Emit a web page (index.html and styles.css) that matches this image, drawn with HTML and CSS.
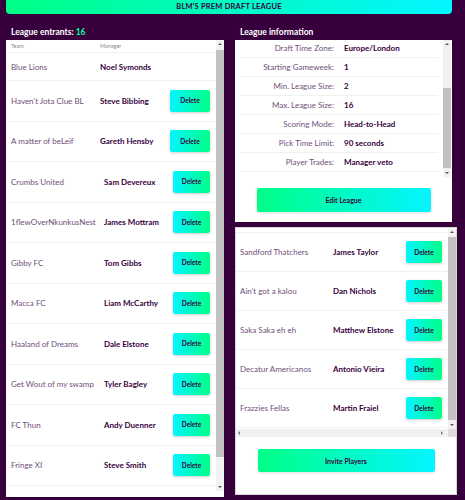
FILE: index.html
```html
<!DOCTYPE html>
<html lang="en">
<head>
  <meta charset="UTF-8">
  <title>BLM's Prem Draft League</title>
  <link rel="stylesheet" href="styles.css">
</head>
<body>

<div class="title-bar">BLM'S PREM DRAFT LEAGUE</div>

<div class="columns">
  <div class="column">
    <h3>League entrants: <span class="count">16</span></h3>
    <div class="panel entrants">
      <div class="scroll-row">
        <div class="scroll-content">
          <div class="row head"><span>Team</span><span>Manager</span></div>
          <div class="row short"><span class="team">Blue Lions</span><span class="manager">Noel Symonds</span></div>
          <div class="row"><span class="team">Haven't Jota Clue BL</span><span class="manager">Steve Bibbing</span><button class="delete">Delete</button></div>
          <div class="row"><span class="team">A matter of beLeif</span><span class="manager">Gareth Hensby</span><button class="delete">Delete</button></div>
          <div class="row alt"><span class="team">Crumbs United</span><span class="manager">Sam Devereux</span><button class="delete">Delete</button></div>
          <div class="row alt"><span class="team">1flewOverNkunkusNest</span><span class="manager">James Mottram</span><button class="delete">Delete</button></div>
          <div class="row alt"><span class="team">Gibby FC</span><span class="manager">Tom Gibbs</span><button class="delete">Delete</button></div>
          <div class="row alt"><span class="team">Macca FC</span><span class="manager">Liam McCarthy</span><button class="delete">Delete</button></div>
          <div class="row alt"><span class="team">Haaland of Dreams</span><span class="manager">Dale Elstone</span><button class="delete">Delete</button></div>
          <div class="row alt"><span class="team">Get Wout of my swamp</span><span class="manager">Tyler Bagley</span><button class="delete">Delete</button></div>
          <div class="row alt"><span class="team">FC Thun</span><span class="manager">Andy Duenner</span><button class="delete">Delete</button></div>
          <div class="row alt"><span class="team">Fringe XI</span><span class="manager">Steve Smith</span><button class="delete">Delete</button></div>
        </div>
        <div class="vbar entrants-bar">
          <span class="arrow up"></span>
          <div class="track"><div class="thumb"></div></div>
          <span class="arrow down"></span>
        </div>
      </div>
    </div>
  </div>

  <div class="column">
    <h3>League information</h3>
    <div class="panel info">
      <div class="scroll-row">
        <div class="scroll-content bottom">
          <div class="info-row"><span class="label">Draft Time Zone:</span><span class="value">Europe/London</span></div>
          <div class="info-row"><span class="label">Starting Gameweek:</span><span class="value">1</span></div>
          <div class="info-row"><span class="label">Min. League Size:</span><span class="value">2</span></div>
          <div class="info-row"><span class="label">Max. League Size:</span><span class="value">16</span></div>
          <div class="info-row"><span class="label">Scoring Mode:</span><span class="value">Head-to-Head</span></div>
          <div class="info-row"><span class="label">Pick Time Limit:</span><span class="value">90 seconds</span></div>
          <div class="info-row"><span class="label">Player Trades:</span><span class="value">Manager veto</span></div>
        </div>
        <div class="vbar info-bar">
          <span class="arrow up"></span>
          <div class="track"><div class="thumb"></div></div>
          <span class="arrow down"></span>
        </div>
      </div>
      <button class="wide-btn edit">Edit League</button>
    </div>

    <div class="panel invites">
      <div class="scroll-row">
        <div class="scroll-content">
          <div class="row clipped"></div>
          <div class="row"><span class="team">Sandford Thatchers</span><span class="manager">James Taylor</span><button class="delete">Delete</button></div>
          <div class="row"><span class="team">Ain't got a kalou</span><span class="manager">Dan Nichols</span><button class="delete">Delete</button></div>
          <div class="row"><span class="team">Saka Saka eh eh</span><span class="manager">Matthew Elstone</span><button class="delete">Delete</button></div>
          <div class="row"><span class="team">Decatur Americanos</span><span class="manager">Antonio Vieira</span><button class="delete">Delete</button></div>
          <div class="row"><span class="team">Frazzies Fellas</span><span class="manager">Martin Fraiel</span><button class="delete">Delete</button></div>
        </div>
        <div class="vbar invites-bar">
          <span class="arrow up"></span>
          <div class="track"><div class="thumb"></div></div>
          <span class="arrow down"></span>
        </div>
      </div>
      <div class="hbar">
        <span class="arrow left"></span>
        <div class="htrack"></div>
        <span class="arrow right"></span>
        <span class="corner"></span>
      </div>
      <button class="wide-btn invite">Invite Players</button>
    </div>
  </div>
</div>

</body>
</html>
```

FILE: styles.css
```css
body {
  margin: 0;
  background-color: #37003c;
  font-family: 'Lato', 'Open Sans', sans-serif;
  color: #37003c;
  font-size: 8px;
}
.title-bar {
  margin-left: 6px;
  width: 446px;
  height: 14px;
  line-height: 14px;
  background: linear-gradient(to right, #00ff87, #04f5ff);
  border-radius: 0 0 4px 4px;
  text-align: center;
  font-weight: 700;
  font-size: 7.5px;
  letter-spacing: 0.2px;
}
.columns {
  display: grid;
  grid-template-columns: 218px 222px;
  column-gap: 11px;
  padding-left: 6px;
}
h3 {
  margin: 0;
  height: 26px;
  box-sizing: border-box;
  padding: 12px 5px 0;
  line-height: 12px;
  font-size: 8.5px;
  font-weight: 700;
  color: #fff;
}
.count {
  color: #00ff87;
}
.panel {
  background: #fff;
}
.scroll-row {
  display: flex;
}
.scroll-content {
  flex: 1;
  overflow: hidden;
  display: flex;
  flex-direction: column;
}
.scroll-content.bottom {
  justify-content: flex-end;
  padding-bottom: 5px;
}

/* entrants list */
.entrants {
  height: 457px;
  box-sizing: border-box;
  padding-bottom: 6px;
}
.entrants .scroll-row {
  height: 451px;
}
.row {
  display: grid;
  grid-template-columns: 89px 1fr 40px;
  align-items: center;
  height: 40.5px;
  flex-shrink: 0;
  padding: 0 6px 0 5px;
  border-bottom: 1px solid #f2f2f2;
  box-sizing: border-box;
}
.row.alt {
  grid-template-columns: 93px 1fr 37px;
}
.row.head {
  height: 13px;
  font-size: 5.5px;
  color: #8a8a8a;
}
.row.short {
  height: 28px;
}
.team {
  color: #6f4f77;
  white-space: nowrap;
}
.manager {
  font-weight: 700;
  white-space: nowrap;
}
.delete {
  height: 22px;
  width: 100%;
  padding: 0;
  border: none;
  border-radius: 2px;
  background: linear-gradient(to right, #04f5ff, #00ff87);
  box-shadow: 0 1px 3px rgba(0,0,0,0.2);
  font-family: inherit;
  font-size: 6.5px;
  font-weight: 700;
  color: #37003c;
}

/* fake scrollbars */
.vbar {
  width: 8px;
  background: #f1f1f1;
  display: flex;
  flex-direction: column;
}
.track {
  flex: 1;
}
.thumb {
  background: #c1c1c1;
}
.arrow {
  display: block;
  width: 8px;
  height: 8px;
  flex-shrink: 0;
  position: relative;
}
.arrow::after {
  content: "";
  position: absolute;
  left: 2px;
  top: 3px;
  border: 2px solid transparent;
}
.arrow.up::after {
  top: 1px;
  border-bottom-color: #555;
}
.arrow.down::after {
  top: 3px;
  border-top-color: #555;
}
.arrow.left::after {
  left: 0;
  top: 2px;
  border-right-color: #777;
}
.arrow.right::after {
  left: 3px;
  top: 2px;
  border-left-color: #777;
}
.entrants-bar .thumb {
  margin-top: 2px;
  height: 407px;
}

/* league info */
.info {
  width: 217px;
  height: 182px;
  box-sizing: border-box;
  padding-bottom: 10px;
}
.info .scroll-row {
  height: 137px;
  padding-right: 1px;
}
.info-row {
  display: grid;
  grid-template-columns: 94px 1fr;
  column-gap: 10px;
  align-items: center;
  height: 19px;
  flex-shrink: 0;
  margin: 0 5px;
  border-bottom: 1px solid #f0f0f0;
  box-sizing: border-box;
}
.label {
  text-align: right;
  color: #6f4f77;
  white-space: nowrap;
}
.value {
  font-weight: 700;
  white-space: nowrap;
}
.info-bar .thumb {
  margin-top: 40px;
  height: 80px;
}
.wide-btn {
  display: block;
  margin: 11px auto 0;
  height: 24px;
  border: none;
  border-radius: 2px;
  background: linear-gradient(to right, #00ff87, #04f5ff);
  box-shadow: 0 1px 3px rgba(0,0,0,0.15);
  font-family: inherit;
  font-size: 7px;
  font-weight: 700;
  color: #37003c;
}
.edit {
  width: 174px;
}

/* invites */
.invites {
  margin-top: 5px;
  height: 268px;
  box-sizing: border-box;
  border: 1px solid #d8d8d8;
}
.invites .scroll-row {
  height: 201px;
}
.invites .row {
  height: 39px;
  grid-template-columns: 93px 1fr 36px;
  padding-left: 4px;
}
.invites .row.clipped {
  height: 5px;
}
.invites-bar .thumb {
  margin-top: 1px;
  height: 183px;
}
.hbar {
  display: flex;
  height: 8px;
  background: #f1f1f1;
}
.htrack {
  flex: 1;
}
.corner {
  width: 8px;
  background: #dcdcdc;
  margin-left: 2px;
}
.hbar .arrow {
  height: 8px;
}
.invite {
  width: 177px;
  height: 23px;
  margin-top: 12px;
}
```
